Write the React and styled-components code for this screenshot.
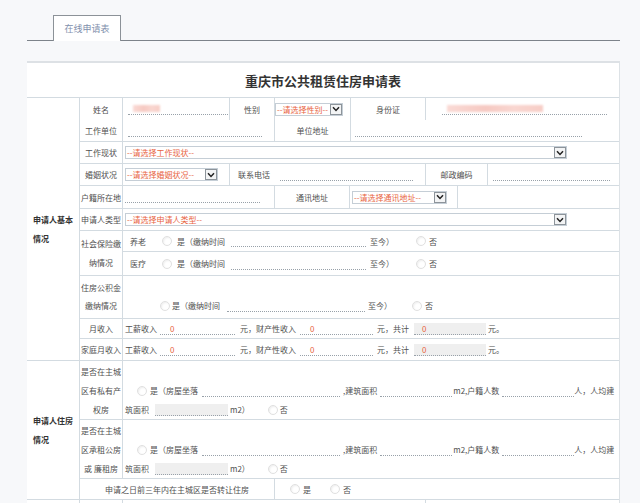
import React from "react";
import styled, { createGlobalStyle } from "styled-components";

const LINE = "#d3dbe1";
const RED = "#e8643f";

const GlobalStyle = createGlobalStyle`
  html, body { margin: 0; padding: 0; background: #f7f8fa; overflow: hidden; }
  body { font-family: "Noto Sans CJK SC", "Noto Sans", sans-serif; font-size: 8px; color: #505050; }
  * { box-sizing: border-box; }
`;

const Page = styled.div`
  width: 640px;
  height: 503px;
  overflow: hidden;
  padding: 15px 0 0 27px;
`;

const TabBar = styled.div`
  width: 593px;
  height: 26px;
  border-bottom: 1px solid #7d838a;
  display: flex;
  align-items: flex-start;
  padding-left: 26px;
`;

const Tab = styled.div`
  width: 68px;
  height: 26px;
  border: 1px solid #8c9298;
  border-bottom: none;
  background: #fff;
  display: flex;
  align-items: center;
  justify-content: center;
  font-size: 9px;
  color: #8190ad;
`;

const Panel = styled.div`
  width: 593px;
  margin-top: 20px;
  background: #fff;
  border-top: 2px solid #dde1e5;
  border-right: 1px solid #dde2e6;
`;

const Title = styled.div`
  height: 35px;
  border-bottom: 1px solid ${LINE};
  display: flex;
  align-items: center;
  justify-content: center;
  font-size: 13px;
  font-weight: bold;
  color: #333;
`;

const Section = styled.div`
  display: grid;
  grid-template-columns: 53px 1fr;
  border-bottom: 1px solid ${LINE};
`;

const SectionLabel = styled.div`
  border-right: 1px solid ${LINE};
  display: flex;
  align-items: center;
  padding-left: 6px;
  line-height: 19px;
  font-weight: 600;
  color: #333;
`;

const Rows = styled.div`
  display: flex;
  flex-direction: column;
`;

const Row = styled.div`
  display: grid;
  grid-template-columns: ${(p) => p.$cols};
  height: ${(p) => p.$h}px;
  border-bottom: ${(p) => (p.$open ? "none" : `1px solid ${LINE}`)};
  &:last-child { border-bottom: none; }
`;

const Cell = styled.div`
  display: flex;
  align-items: ${(p) => p.$valign || "center"};
  justify-content: ${(p) => (p.$center ? "center" : "flex-start")};
  padding-left: ${(p) => p.$pad || 0}px;
  padding-top: ${(p) => p.$pt || 0}px;
  padding-bottom: ${(p) => p.$pb || 0}px;
  border-right: ${(p) => (p.$edge ? `1px solid ${LINE}` : "none")};
  white-space: nowrap;
  min-width: 0;
`;

const Stack = styled.div`
  text-align: center;
  line-height: ${(p) => p.$lh}px;
`;

const SubRows = styled.div`
  display: flex;
  flex-direction: column;
`;

const SubRow = styled.div`
  height: ${(p) => p.$h}px;
  display: flex;
  align-items: center;
  padding-left: ${(p) => p.$pad || 0}px;
  border-bottom: 1px solid ${LINE};
  &:last-child { border-bottom: none; }
`;

const Lines = styled.div`
  display: flex;
  flex-direction: column;
  padding-top: ${(p) => p.$pt || 0}px;
`;

const Line = styled.div`
  display: flex;
  align-items: center;
  height: ${(p) => p.$h || 13}px;
  padding-left: ${(p) => p.$pad || 0}px;
  white-space: nowrap;
`;

const Txt = styled.span`
  margin-left: ${(p) => p.$ml || 0}px;
  flex: none;
`;

const Field = styled.span`
  display: inline-flex;
  align-items: center;
  flex: none;
  width: ${(p) => p.$w}px;
  height: 12px;
  margin-left: ${(p) => p.$ml || 0}px;
  padding-left: ${(p) => p.$pl || 0}px;
  border-bottom: 1px dotted #98a1a9;
  background: ${(p) => (p.$gray ? "#efefef" : "transparent")};
  color: ${RED};
`;

const Redacted = styled.span`
  display: inline-block;
  width: ${(p) => p.$w}px;
  height: 7px;
  background: linear-gradient(90deg, #fadad5, #f6c9c2 40%, #f9d6d0 70%, #f7cdc6);
  filter: blur(1px);
`;

const Radio = styled.span`
  display: inline-block;
  flex: none;
  width: 10px;
  height: 10px;
  border-radius: 50%;
  margin-left: ${(p) => p.$ml || 0}px;
  border: 1px solid #e0e0e0;
  background: #fff;
  box-shadow: inset 1px 1px 2px rgba(0, 0, 0, 0.07);
`;

const SelectBox = styled.div`
  display: flex;
  align-items: center;
  flex: none;
  width: ${(p) => p.$w}px;
  height: 13px;
  margin-left: ${(p) => p.$ml || 0}px;
  border: 1px solid #c5ced6;
  background: #fff;
`;

const SelectText = styled.span`
  flex: 1;
  min-width: 0;
  overflow: hidden;
  white-space: nowrap;
  color: ${RED};
  padding-left: 1px;
  line-height: 11px;
`;

const SelectArrow = styled.span`
  flex: none;
  width: 12px;
  height: 11px;
  border: 1px solid #8d949a;
  background: #f3f4f5;
  display: flex;
  align-items: center;
  justify-content: center;
`;

function Select({ w, ml, text }) {
  return (
    <SelectBox $w={w} $ml={ml}>
      <SelectText>{text}</SelectText>
      <SelectArrow>
        <svg width="8" height="6" viewBox="0 0 8 6">
          <path d="M1 1.2 L4 4.4 L7 1.2" fill="none" stroke="#222" strokeWidth="1.5" />
        </svg>
      </SelectArrow>
    </SelectBox>
  );
}

function InsuranceLine({ kind }) {
  return (
    <>
      <Txt>{kind}</Txt>
      <Radio $ml={16} />
      <Txt $ml={5}>是（缴纳时间</Txt>
      <Field $ml={6} $w={135} />
      <Txt $ml={4}>至今）</Txt>
      <Radio $ml={22} />
      <Txt $ml={3}>否</Txt>
    </>
  );
}

function IncomeRow({ label, last }) {
  return (
    <Row $h={last ? 21 : 20} $cols="43px 1fr">
      <Cell $edge $center>{label}</Cell>
      <Cell>
        <Line $pad={2}>
          <Txt>工薪收入</Txt>
          <Field $ml={3} $w={75} $pl={10}>0</Field>
          <Txt $ml={5}>元，财产性收入</Txt>
          <Field $ml={4} $w={73} $pl={10}>0</Field>
          <Txt $ml={4}>元，共计</Txt>
          <Field $ml={5} $w={72} $pl={8} $gray>0</Field>
          <Txt $ml={2}>元。</Txt>
        </Line>
      </Cell>
    </Row>
  );
}

function HousingRow({ lines }) {
  return (
    <Row $h={59} $cols="43px 1fr">
      <Cell $edge $center $valign="flex-start" $pt={1}>
        <Stack $lh={19}>
          {lines[0]}<br />{lines[1]}<br />{lines[2]}
        </Stack>
      </Cell>
      <Cell $valign="flex-start">
        <Lines $pt={20}>
          <Line $h={19} $pad={14}>
            <Radio />
            <Txt $ml={3}>是（房屋坐落</Txt>
            <Field $ml={4} $w={138} />
            <Txt $ml={3}>,建筑面积</Txt>
            <Field $ml={3} $w={72} />
            <Txt $ml={1}>m2,户籍人数</Txt>
            <Field $ml={3} $w={72} />
            <Txt>人，人均建</Txt>
          </Line>
          <Line $h={19} $pad={2}>
            <Txt>筑面积</Txt>
            <Field $ml={6} $w={73} $gray />
            <Txt $ml={2}>m2）</Txt>
            <Radio $ml={18} />
            <Txt $ml={2}>否</Txt>
          </Line>
        </Lines>
      </Cell>
    </Row>
  );
}

export default function App() {
  return (
    <>
      <GlobalStyle />
      <Page>
        <TabBar>
          <Tab>在线申请表</Tab>
        </TabBar>
        <Panel>
          <Title>重庆市公共租赁住房申请表</Title>

          <Section>
            <SectionLabel>申请人基本<br />情况</SectionLabel>
            <Rows>
              <Row $h={22} $cols="43px 107px 45px 76px 75px 1fr" $open>
                <Cell $edge $center>姓名</Cell>
                <Cell $edge $pad={5}>
                  <Field $w={100} $pl={5}><Redacted $w={27} /></Field>
                </Cell>
                <Cell $edge $center>性别</Cell>
                <Cell $edge><Select w={68} text="--请选择性别--" /></Cell>
                <Cell $edge $center>身份证</Cell>
                <Cell $pad={16}>
                  <Field $w={165} $pl={5}><Redacted $w={96} /></Field>
                </Cell>
              </Row>
              <Row $h={22} $cols="43px 152px 76px 1fr">
                <Cell $edge $center>工作单位</Cell>
                <Cell $edge $pad={5}><Field $w={134} /></Cell>
                <Cell $edge $center>单位地址</Cell>
                <Cell $pad={4}><Field $w={227} /></Cell>
              </Row>
              <Row $h={22} $cols="43px 1fr">
                <Cell $edge $center>工作现状</Cell>
                <Cell $pad={2}><Select w={442} text="--请选择工作现状--" /></Cell>
              </Row>
              <Row $h={22} $cols="43px 107px 48px 148px 62px 1fr">
                <Cell $edge $center>婚姻状况</Cell>
                <Cell $edge $pad={2}><Select w={93} text="--请选择婚姻状况--" /></Cell>
                <Cell $center>联系电话</Cell>
                <Cell $edge $pad={2}><Field $w={133} /></Cell>
                <Cell $edge $center>邮政编码</Cell>
                <Cell $pad={5}><Field $w={117} /></Cell>
              </Row>
              <Row $h={23} $cols="43px 152px 75px 108px 1fr">
                <Cell $edge $center>户籍所在地</Cell>
                <Cell $edge $pad={2}><Field $w={135} /></Cell>
                <Cell $edge $center>通讯地址</Cell>
                <Cell $edge $pad={2}><Select w={95} text="--请选择通讯地址--" /></Cell>
                <Cell />
              </Row>
              <Row $h={22} $cols="43px 1fr">
                <Cell $edge $center>申请人类型</Cell>
                <Cell $pad={2}><Select w={442} text="--请选择申请人类型--" /></Cell>
              </Row>
              <Row $h={45} $cols="43px 1fr">
                <Cell $edge $center>
                  <Stack $lh={19}>社会保险缴<br />纳情况</Stack>
                </Cell>
                <SubRows>
                  <SubRow $h={21} $pad={7}><InsuranceLine kind="养老" /></SubRow>
                  <SubRow $h={23} $pad={7}><InsuranceLine kind="医疗" /></SubRow>
                </SubRows>
              </Row>
              <Row $h={43} $cols="43px 1fr">
                <Cell $edge $center>
                  <Stack $lh={18}>住房公积金<br />缴纳情况</Stack>
                </Cell>
                <Cell $valign="flex-end" $pb={6}>
                  <Line $pad={37}>
                    <Radio />
                    <Txt $ml={2}>是（缴纳时间</Txt>
                    <Field $ml={7} $w={138} />
                    <Txt $ml={3}>至今）</Txt>
                    <Radio $ml={20} />
                    <Txt $ml={3}>否</Txt>
                  </Line>
                </Cell>
              </Row>
              <IncomeRow label="月收入" />
              <IncomeRow label="家庭月收入" last />
            </Rows>
          </Section>

          <Section>
            <SectionLabel>申请人住房<br />情况</SectionLabel>
            <Rows>
              <HousingRow lines={["是否在主城", "区有私有产", "权房"]} />
              <HousingRow lines={["是否在主城", "区承租公房", "或 廉租房"]} />
              <Row $h={20} $cols="195px 1fr">
                <Cell $edge $center>申请之日前三年内在主城区是否转让住房</Cell>
                <Cell>
                  <Line $pad={15}>
                    <Radio />
                    <Txt $ml={3}>是</Txt>
                    <Radio $ml={19} />
                    <Txt $ml={3}>否</Txt>
                  </Line>
                </Cell>
              </Row>
            </Rows>
          </Section>

          <Section>
            <SectionLabel />
            <Rows>
              <Row $h={22} $cols="43px 303px 1fr">
                <Cell $edge />
                <Cell $edge />
                <Cell />
              </Row>
            </Rows>
          </Section>
        </Panel>
      </Page>
    </>
  );
}
